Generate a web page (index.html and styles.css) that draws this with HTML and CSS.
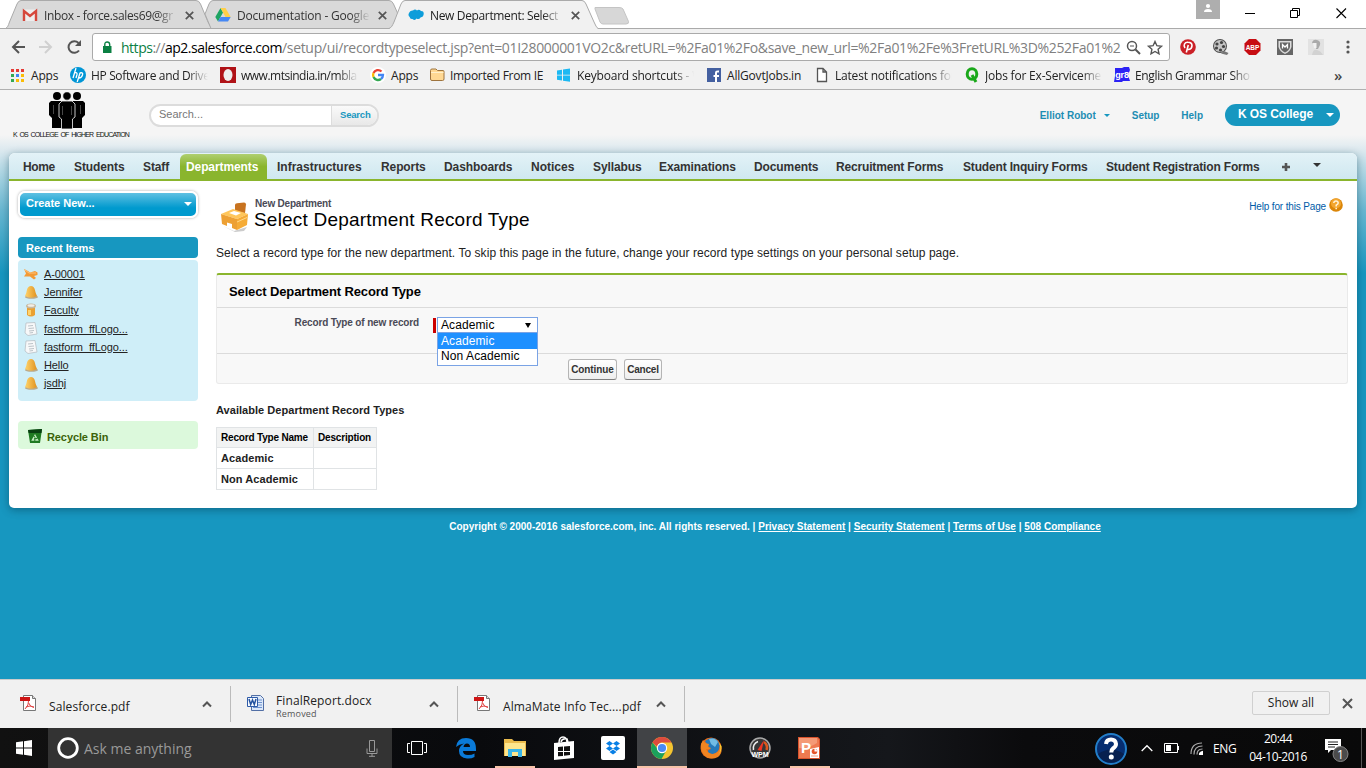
FILE: index.html
```html
<!DOCTYPE html>
<html lang="en">
<head>
<meta charset="utf-8">
<title>New Department: Select Department Record Type</title>
<link rel="stylesheet" href="styles.css">
</head>
<body>
<header class="browser">
  <div class="tabstrip">
    <svg class="tab-shapes" width="640" height="29" viewBox="0 0 640 29">
      <path d="M5.500 28.500C8 27 8 26 9.500 22L17 4Q18.500.500 21 .500H196Q199 .500 200.500 4L208 22Q210 27 213 28.500Z" fill="#d9d9d9" stroke="#aaa"/>
      <path d="M211 28.500L205 14L209 4Q210.500.500 213 .500H389Q392 .500 393.500 4L398 14L392 28.500Z" fill="#d9d9d9" stroke="#aaa"/>
      <path d="M595 7.500H619Q622 7.500 623 9L628.500 21.500Q629 24 626 24H603Q601 24 600 22L595 9Z" fill="#d7d7d7" stroke="#c4c4c4"/>
      <path d="M389 29C392 27 392 26 394 22L401 4Q402.500.500 405 .500H582Q584.500.500 586 4L594 22Q596 27 598 29Z" fill="#f1f1f1"/>
      <path d="M389 28.500C392 27 392 26 394 22L401 4Q402.500.500 405 .500H582Q584.500.500 586 4L594 22Q596 27 598 28.500" fill="none" stroke="#aaa"/>
    </svg>
    <div class="tab tab-one"><svg width="16" height="16" viewBox="0 0 16 16"><path d="M1 2.500H15V14H1Z" fill="#eee"/><path d="M2 14V4L8 9L14 4V14" fill="none" stroke="#d6483c" stroke-width="2.400"/></svg><span class="tab-title fade">Inbox - force.sales69@gr</span><svg class="close" width="9" height="9" viewBox="0 0 9 9"><path d="M.8.800L8.200 8.200M8.200.800L.8 8.200"/></svg></div>
    <div class="tab tab-two"><svg width="16" height="16" viewBox="0 0 16 16"><path d="M5.500 1L.3 10L3 14.500L8 5.500Z" fill="#1da462"/><path d="M5.500 1H10.500L15.700 10H10.500Z" fill="#ffcf48"/><path d="M5.500 10H15.700L13 14.500H3Z" fill="#4688f4"/></svg><span class="tab-title fade">Documentation - Google</span><svg class="close" width="9" height="9" viewBox="0 0 9 9"><path d="M.8.800L8.200 8.200M8.200.800L.8 8.200"/></svg></div>
    <div class="tab tab-three"><svg width="16" height="16" viewBox="0 0 16 16"><path d="M1 6Q2 3 5 3.500Q7 1.500 9 3.500Q11 2 13 4Q16 4 15.700 7Q15.500 10 12.500 10.500Q11 13 8.500 11.500Q7 14 4.500 12Q2 12.500 1.700 10Q-.3 8.500 1 6Z" fill="#0d9dda"/></svg><span class="tab-title fade">New Department: Select</span><svg class="close" width="9" height="9" viewBox="0 0 9 9"><path d="M.8.800L8.200 8.200M8.200.800L.8 8.200"/></svg></div>
    <div class="window-controls">
      <svg class="profile" width="24" height="19" viewBox="0 0 24 19"><path d="M0 0H24V19H0Z" fill="#aeaeae"/><circle cx="12" cy="6" r="2.100" fill="#fff"/><path d="M8 12Q8 9 12 9T16 12Z" fill="#fff"/></svg>
      <svg class="minimize" width="11" height="11" viewBox="0 0 11 11"><path d="M0 5.500H10" stroke="#000"/></svg>
      <svg class="restore" width="11" height="11" viewBox="0 0 11 11"><path d="M.5 2.500H7.500V9.500H.5ZM2.500 2.500V.500H9.500V7.500H7.500" fill="none" stroke="#000"/></svg>
      <svg width="11" height="11" viewBox="0 0 11 11"><path d="M.5.500L10 10M10 .500L.5 10" stroke="#000" stroke-width="1.100"/></svg>
    </div>
  </div>
  <div class="toolbar">
    <svg width="84" height="16" viewBox="0 0 84 16" fill="none" stroke-width="2"><path d="M15 8H3M9 2L3 8L9 14" stroke="#555"/><path d="M29 8H41M35 2L41 8L35 14" stroke="#d0d0d0"/><path d="M69 11.500A5.800 5.800 0 1 1 68.500 4" stroke="#555"/><path d="M71 1V7H65Z" fill="#555"/></svg>
    <div class="address">
      <svg width="10" height="13" viewBox="0 0 10 13"><path d="M1 5H9.500V12H1Z" fill="#0b8043"/><path d="M2.800 6V3.500Q2.800 1 5.200 1T7.700 3.500V6" fill="none" stroke="#0b8043" stroke-width="1.400"/></svg>
      <span class="url"><span class="origin"><span class="scheme">https</span>://<span class="host">ap2.salesforce.com</span></span>/setup/ui/recordtypeselect.jsp?ent=01I28000001VO2c&amp;retURL=%2Fa01%2Fo&amp;save_new_url=%2Fa01%2Fe%3FretURL%3D%252Fa01%2</span>
      <svg width="38" height="15" viewBox="0 0 38 15" fill="none" stroke="#555"><circle cx="6" cy="6" r="4.500" stroke-width="1.500"/><path d="M9.500 9.500L14 14" stroke-width="2"/><path d="M4 6H8"/><path d="M29 1.500L30.900 5.700L35.500 6.200L32.100 9.300L33 13.800L29 11.500L25 13.800L25.900 9.300L22.500 6.200L27.100 5.700Z" stroke-width="1.400"/></svg>
    </div>
    <div class="extensions">
      <svg width="16" height="16" viewBox="0 0 16 16"><circle cx="8" cy="8" r="7.800" fill="#cb2027"/><path d="M5 9Q3.500 7 4.500 5T8 3.200Q12 3.200 12 6.500T8.700 10.500Q7.600 10.500 7.200 9.800M8.300 6L6.300 13.500" fill="none" stroke="#fff" stroke-width="1.600"/></svg>
      <svg width="17" height="16" viewBox="0 0 17 16"><circle cx="8" cy="7" r="7" fill="#4d4d4d"/><circle cx="8" cy="7" r="6" fill="#c4c4c4"/><g fill="#444"><circle cx="5" cy="5" r="1.600"/><circle cx="9.500" cy="3.500" r="1.600"/><circle cx="4.500" cy="9" r="1.600"/><circle cx="8.500" cy="11" r="1.600"/><circle cx="11.500" cy="7.500" r="1.600"/></g><path d="M12 12L16.500 14L15 16L9 14.500Z" fill="#777"/></svg>
      <svg width="17" height="16" viewBox="0 0 17 16"><path d="M5 0H12L16.500 4.500V11.500L12 16H5L.500 11.500V4.500Z" fill="#c70d12"/><text x="8.500" y="11" class="abp">ABP</text></svg>
      <svg width="16" height="16" viewBox="0 0 16 16"><path d="M0 0H16V16H0Z" fill="#666"/><path d="M1.500 2H14.500V8Q13 13 8 15Q3 13 1.500 8Z" fill="#ddd"/><path d="M3 3.500H13V8Q12 11.500 8 13.500Q4 11.500 3 8Z" fill="#666"/><path d="M5.500 9.500V5.500L8 8L10.500 5.500V9.500" fill="none" stroke="#fff" stroke-width="1.300"/></svg>
      <svg width="16" height="16" viewBox="0 0 16 16"><path d="M0 0H16V16H0Z" fill="#e2e2e2"/><path d="M4 4Q5 0 9 1Q13 2 12 6L10 10L8 10L8 5Z" fill="#aaa"/><path d="M5 4H8.500V9H6Z" fill="#f1f1f1"/><path d="M4 16Q5 10 9 11T15 16Z" fill="#d2d2d2"/></svg>
      <svg class="dots" width="4" height="14" viewBox="0 0 4 14" fill="#555"><circle cx="2" cy="2" r="1.600"/><circle cx="2" cy="7" r="1.600"/><circle cx="2" cy="12" r="1.600"/></svg>
    </div>
  </div>
  <nav class="bookmarks">
    <a class="bookmark"><svg width="16" height="16" viewBox="0 0 16 16"><path d="M1 2H4V5H1ZM6 2H9V5H6ZM11 2H14V5H11Z" fill="#e53935"/><path d="M1 7H4V10H1Z" fill="#34a853"/><path d="M6 7H9V10H6Z" fill="#4285f4"/><path d="M11 7H14V10H11ZM11 12H14V15H11ZM6 12H9V15H6Z" fill="#fbbc05"/><path d="M1 12H4V15H1Z" fill="#34a853"/></svg><span>Apps</span></a>
    <a class="bookmark"><svg width="16" height="16" viewBox="0 0 16 16"><circle cx="8" cy="8" r="8" fill="#0096d6"/><path d="M6 1L3 11M4.500 6Q7.500 5 7 7.500L6 11M10 6L7.200 15M9.800 6Q13.500 5 12.500 8T9 11" fill="none" stroke="#fff" stroke-width="1.300"/></svg><span class="clip fade bm-tight">HP Software and Drive</span></a>
    <a class="bookmark"><svg width="16" height="16" viewBox="0 0 16 16"><path d="M0 0H16V16H0Z" fill="#b01217"/><ellipse cx="8" cy="8" rx="4.500" ry="6" fill="#eee"/></svg><span class="clip fade bm-mts">www.mtsindia.in/mbla</span></a>
    <a class="bookmark"><svg width="16" height="16" viewBox="0 0 16 16" fill="none" stroke-width="2.300"><circle cx="8" cy="8" r="8" fill="#fff"/><path d="M11.500 4.500A5 5 0 0 0 3.500 6" stroke="#ea4335"/><path d="M3.500 6A5 5 0 0 0 3.500 10" stroke="#fbbc05"/><path d="M3.500 10A5 5 0 0 0 11 12" stroke="#34a853"/><path d="M11 12Q13 10.500 13 8H8" stroke="#4285f4"/></svg><span>Apps</span></a>
    <a class="bookmark"><svg width="16" height="16" viewBox="0 0 16 16"><path d="M1.500 3.500Q1.500 2 3 2H7L8.500 3.500H14Q15 3.500 15 4.500V12Q15 13.500 13.500 13.500H3Q1.500 13.500 1.500 12Z" fill="#ffd893" stroke="#9e743e"/><path d="M2 5.500H14.500" stroke="#fff0cc"/></svg><span class="bm-import">Imported From IE</span></a>
    <a class="bookmark"><svg width="16" height="16" viewBox="0 0 16 16"><path d="M1 3.500L6 2.700V7.700H1ZM7 2.500L14 1.500V7.700H7ZM1 8.500H6V13.500L1 12.700ZM7 8.500H14V14.700L7 13.700Z" fill="#1cb9f3"/></svg><span class="clip fade">Keyboard shortcuts - W</span></a>
    <a class="bookmark"><svg width="16" height="16" viewBox="0 0 16 16"><path d="M1 1H15V15H1Z" fill="#4460a0"/><path d="M10 15V9M7.500 9H13M10 10V6Q10 4.200 13 4.500" fill="none" stroke="#fff" stroke-width="2"/></svg><span>AllGovtJobs.in</span></a>
    <a class="bookmark"><svg width="16" height="16" viewBox="0 0 16 16"><path d="M3.500 1.500H9L12.500 5V14.500H3.500ZM9 1.500V5H12.500" fill="#fff" stroke="#555" stroke-width="1.300"/></svg><span class="clip fade">Latest notifications for</span></a>
    <a class="bookmark"><svg width="16" height="16" viewBox="0 0 16 16" fill="none" stroke="#1aa81a" stroke-width="3"><ellipse cx="8" cy="7" rx="4.800" ry="5.300"/><path d="M8 8L12 15"/></svg><span class="clip fade">Jobs for Ex-Serviceme</span></a>
    <a class="bookmark"><svg width="16" height="16" viewBox="0 0 16 16"><path d="M1 1H8L10 0H15L16 3L14 8L16 14H9L8 15H0L1 9Z" fill="#2c22f5"/><text x="8" y="11" class="gr8">gr8</text></svg><span class="clip fade bm-tight">English Grammar Sho</span></a>
    <span class="more">»</span>
  </nav>
</header>

<main class="page">
  <div class="page-head">
    <div class="org-logo">
      <svg width="36" height="38" viewBox="0 0 36 38"><circle cx="8" cy="4" r="4"/><circle cx="28" cy="4" r="4"/><path d="M2 9H13V36H3V26L0 23V11ZM23 9H34L36 11V23L33 26V36H23Z"/><path d="M10 12L13 9H23L26 12V25L23.500 27V37H12.500V27L10 25Z" stroke="#f5f5f5" stroke-width=".8"/><circle cx="18" cy="4" r="4.200" stroke="#f5f5f5" stroke-width=".7"/><path d="M4.500 13V22M31.500 13V22M13.500 14V23M22.500 14V23" stroke="#777" stroke-width=".6"/></svg>
      <span>K OS COLLEGE OF HIGHER EDUCATION</span>
    </div>
    <div class="search"><span class="search-field">Search...</span><span class="search-button">Search</span></div>
    <div class="user-links">
      <a class="user-name">Elliot Robot</a><i class="caret caret-blue"></i><a class="setup">Setup</a><a class="help">Help</a>
      <div class="app-menu"><span>K OS College</span><i class="caret caret-white"></i></div>
    </div>
  </div>
  <div class="card">
    <nav class="app-tabs">
      <a class="home">Home</a><a>Students</a><a>Staff</a><a class="active">Departments</a><a class="wide">Infrastructures</a><a>Reports</a><a>Dashboards</a><a class="wide">Notices</a><a>Syllabus</a><a>Examinations</a><a>Documents</a><a class="narrow">Recruitment Forms</a><a class="narrow">Student Inquiry Forms</a><a class="narrow">Student Registration Forms</a>
      <svg class="plus" width="8" height="8" viewBox="0 0 8 8"><path d="M0 4H8M4 0V8" stroke="#555" stroke-width="2.600"/></svg><i class="caret caret-dark"></i>
    </nav>
    <div class="columns">
      <aside class="sidebar">
        <div class="create"><span>Create New...</span><i class="caret caret-white"></i></div>
        <h2 class="side-title">Recent Items</h2>
        <ul class="recent">
          <li><svg width="14" height="14" viewBox="0 0 14 14"><path d="M0 2L4 4L6 5.500L11 4L13.500 5.500V8L10 9L12 11L10 12.500L6 9.500L0 9.500L2 6.500Z" fill="#f39a35"/><path d="M1 3L5 6L12 6" stroke="#ffc27a" fill="none"/></svg><a>A-00001</a></li>
          <li><svg width="14" height="14" viewBox="0 0 14 14"><use href="#bell"/></svg><a>Jennifer</a></li>
          <li><svg width="14" height="14" viewBox="0 0 14 14"><path d="M3 3H11V12Q7 15 3 12Z" fill="#eaa132"/><ellipse cx="7" cy="3" rx="5" ry="2.500" fill="#c6b8a0"/><ellipse cx="7" cy="2.500" rx="3.500" ry="1.300" fill="#f2eee6"/><path d="M4 7H7V12H4Z" fill="#ffd26c"/></svg><a>Faculty</a></li>
          <li><svg width="14" height="14" viewBox="0 0 14 14"><use href="#sheet"/></svg><a>fastform_ffLogo...</a></li>
          <li><svg width="14" height="14" viewBox="0 0 14 14"><use href="#sheet"/></svg><a>fastform_ffLogo...</a></li>
          <li><svg width="14" height="14" viewBox="0 0 14 14"><use href="#bell"/></svg><a>Hello</a></li>
          <li><svg width="14" height="14" viewBox="0 0 14 14"><use href="#bell"/></svg><a>jsdhj</a></li>
        </ul>
        <div class="recycle"><svg width="14" height="15" viewBox="0 0 14 15"><path d="M0 1L14 0L12 14H2Z" fill="#1f7a22"/><path d="M0 1L14 0L13.500 4H.7Z" fill="#0a3f12"/><path d="M4.500 11L7 6.500L9.500 11Z" fill="none" stroke="#c5ecc2" stroke-width="1.500" stroke-dasharray="3.500 1"/></svg><span>Recycle Bin</span></div>
      </aside>
      <section class="content">
        <div class="title-row">
          <svg width="29" height="30" viewBox="0 0 29 30"><path d="M3 24L14 29L27 25L24 29L15 30Z" fill="#ccc"/><path d="M15 3Q15 1.500 17 1.200L24 .500Q26 .700 26 2.500L25 11L15 10Z" fill="#c87320"/><path d="M1 12L13 7L28 12L17 17Z" fill="#ffc65a"/><path d="M1 12L17 17V28L12 26V22L7 20.500V24L2 22Z" fill="#eda033"/><path d="M17 17L28 12L27 23L17 28Z" fill="#f5ab36"/><path d="M17 20L27 15.500" stroke="#ffd88a" fill="none"/><path d="M9 11L14 9L21 11L16 13.500Z" fill="#fff"/></svg>
          <div class="titles"><h1>New Department</h1><h2>Select Department Record Type</h2></div>
          <div class="page-help"><a>Help for this Page</a><svg width="14" height="14" viewBox="0 0 14 14"><circle cx="7" cy="7" r="6.800" fill="#db8608"/><circle cx="7" cy="5.500" r="5" fill="#f3a62f"/><path d="M4.800 5Q5 3 7 3T9.200 5Q9.200 6.200 7.200 7.200V8.500M7.200 9.800V11.300" fill="none" stroke="#fff3d8" stroke-width="1.500"/></svg></div>
        </div>
        <p class="intro">Select a record type for the new department. To skip this page in the future, change your record type settings on your personal setup page.</p>
        <div class="form">
          <h3>Select Department Record Type</h3>
          <div class="form-row">
            <label>Record Type of new record</label><i class="required"></i>
            <div class="select"><span>Academic</span><i class="arrow"></i>
              <div class="options"><div class="chosen">Academic</div><div>Non Academic</div></div>
            </div>
          </div>
          <div class="form-actions"><span class="btn btn-continue">Continue</span><span class="btn btn-cancel">Cancel</span></div>
        </div>
        <h4>Available Department Record Types</h4>
        <table class="types">
          <tr><th class="type-name">Record Type Name</th><th class="type-desc">Description</th></tr>
          <tr><td>Academic</td><td></td></tr>
          <tr><td>Non Academic</td><td></td></tr>
        </table>
      </section>
    </div>
  </div>
  <footer>Copyright © 2000-2016 salesforce.com, inc. All rights reserved. | <a>Privacy Statement</a> | <a>Security Statement</a> | <a>Terms of Use</a> | <a>508 Compliance</a></footer>
</main>

<div class="downloads">
  <div class="download"><svg width="17" height="17" viewBox="0 0 17 17"><use href="#pdf"/></svg><span class="file">Salesforce.pdf</span><svg class="chev" width="10" height="7" viewBox="0 0 10 7"><path d="M1 5.500L5 1.500L9 5.500"/></svg></div>
  <div class="download"><svg width="17" height="17" viewBox="0 0 17 17"><path d="M4.500.500H13.500L16.500 3.500V15.500H4.500Z" fill="#dce8f9" stroke="#526fa5"/><path d="M11 5H15M11 7.500H15M11 10H15M6 12.500H15" stroke="#6e93cf"/><path d="M.5 2.500H10.500V11.500H.5Z" fill="#f7faff" stroke="#2e5ba8"/><path d="M2 4L3.700 9.500L5.500 5L7.300 9.500L9 4" fill="none" stroke="#2554a0" stroke-width="1.500"/></svg><span class="file file-doc">FinalReport.docx<small>Removed</small></span><svg class="chev" width="10" height="7" viewBox="0 0 10 7"><path d="M1 5.500L5 1.500L9 5.500"/></svg></div>
  <div class="download"><svg width="17" height="17" viewBox="0 0 17 17"><use href="#pdf"/></svg><span class="file">AlmaMate Info Tec....pdf</span><svg class="chev" width="10" height="7" viewBox="0 0 10 7"><path d="M1 5.500L5 1.500L9 5.500"/></svg></div>
  <span class="show-all">Show all</span>
  <svg class="close-bar" width="11" height="11" viewBox="0 0 11 11"><path d="M1 1L10 10M10 1L1 10" stroke="#555" stroke-width="2"/></svg>
</div>

<div class="taskbar">
  <div class="slot start"><svg width="16" height="16" viewBox="0 0 16 16"><path d="M0 2.300L7 1.300V7.500H0ZM8 1.200L16 0V7.500H8ZM0 8.500H7V14.700L0 13.700ZM8 8.500H16V16L8 14.800Z" fill="#fff"/></svg></div>
  <div class="cortana"><svg width="22" height="22" viewBox="0 0 22 22"><circle cx="11" cy="11" r="9.300" fill="none" stroke="#fff" stroke-width="2.800"/></svg><span>Ask me anything</span><svg width="12" height="17" viewBox="0 0 12 17" fill="none" stroke="#999"><path d="M3.500.500H8.500V11.500H3.500ZM1 8.500V13.500H11V8.500M6 13.500V16.500M3 16.300H9"/></svg></div>
  <div class="slot"><svg width="20" height="16" viewBox="0 0 20 16" fill="none" stroke="#fff"><path d="M4.500 1.500H15.500V14.500H4.500ZM3 3.500H.5V12.500H3M17 3.500H19.500V12.500H17"/></svg></div>
  <div class="slot"><svg width="22" height="22" viewBox="0 0 22 22"><path d="M1 10Q2 1 11 1Q21 1 21 12V14H8Q8 18 13 18Q17 18 19.500 16.500V20Q16 22 12 21.500Q4 21 4 14Q4 9 9 6.500Q4 7 1 10ZM8.500 10H15Q15 6.500 12 6.500T8.500 10Z" fill="#0a7ad8" fill-rule="evenodd"/></svg></div>
  <div class="slot running"><svg width="22" height="20" viewBox="0 0 22 20"><path d="M0 1H8L10 3H22V18H0Z" fill="#eabb4d"/><path d="M1 5H21V18H1Z" fill="#fde58d"/><path d="M4 11H18V19H14V14H8V19H4Z" fill="#39b5e9"/></svg></div>
  <div class="slot"><svg width="22" height="24" viewBox="0 0 22 24"><path d="M6 7Q6 1 10 1T14 7M8 6Q9 2 14 3L15 6" fill="none" stroke="#fff" stroke-width="1.500"/><path d="M1 7L21 5V22L1 24Z" fill="#fff"/><path d="M5 11L10 10.500V15H5ZM11 10.500L17 10V15H11ZM5 16H10V20L5 20.200ZM11 16H17V19L11 19.700Z" fill="#111"/></svg></div>
  <div class="slot"><svg width="24" height="24" viewBox="0 0 24 24"><rect width="24" height="24" rx="2" fill="#fff"/><path d="M8.500 5L12 7.500L8.500 10L5 7.500ZM15.500 5L19 7.500L15.500 10L12 7.500ZM8.500 10L12 12.500L8.500 15L5 12.500ZM15.500 10L19 12.500L15.500 15L12 12.500ZM8.500 16L12 13.500L15.500 16L12 18.500Z" fill="#087fe5"/></svg></div>
  <div class="slot running active-app"><svg width="22" height="22" viewBox="0 0 22 22"><circle cx="11" cy="11" r="11" fill="#f4c430"/><path d="M1.500 5.500A11 11 0 0 1 20.500 5.500H11Q7 5.500 6.200 10Z" fill="#dd4b3e"/><path d="M1.500 5.500A11 11 0 0 0 10.500 22L15 14Q9 17 6 11Z" fill="#1ba15c"/><circle cx="11" cy="11" r="5.200" fill="#fff"/><circle cx="11" cy="11" r="4.100" fill="#4a8af4"/></svg></div>
  <div class="slot"><svg width="22" height="22" viewBox="0 0 22 22"><circle cx="11" cy="11" r="10.500" fill="#e66a18"/><path d="M5 4Q13-2 18 4Q21 9 18 14Q14 19 9 16Q6 13 11 12L8 9Z" fill="#2679b9"/><path d="M9 2Q15 0 18 5L15 10L11 7Z" fill="#72bce4"/><path d="M1 7L3 3L5 6L9 7L8 10L11 11Q9 13 6 12Q9 19 16 16Q20 14 20 8Q24 15 18 20Q10 24 4 18Q0 13 1 7Z" fill="#ef8421"/><path d="M18 5Q23 11 18 18Q22 14 21.500 9Z" fill="#ffd331"/></svg></div>
  <div class="slot"><svg width="22" height="22" viewBox="0 0 22 22"><circle cx="11" cy="11" r="10" fill="#373737" stroke="#aaa" stroke-width="1.500"/><path d="M4.500 13A7 7 0 0 1 9 4.500" fill="none" stroke="#eee" stroke-width="1.500"/><path d="M15 5A7 7 0 0 1 17.500 13" fill="none" stroke="#dd571d" stroke-width="2.500"/><path d="M8.500 13L15 3L12.500 14Z" fill="#f13524"/><text x="11" y="20" class="wpm">WPM</text></svg></div>
  <div class="slot running"><svg width="22" height="22" viewBox="0 0 22 22"><path d="M0 0H20L22 2V22H0Z" fill="#d9532c"/><path d="M1 1H19.500L21 2.500V21H1Z" fill="#ee7a50"/><path d="M1 1H19V6Q10 12 1 11Z" fill="#f49a76"/><path d="M12 12L21 10V21H12Z" fill="#fff"/><circle cx="16.500" cy="14.500" r="2.800" fill="#e4572c"/><path d="M16.500 14.500V11L20 14.500Z" fill="#fff"/><path d="M13 19H20" stroke="#f0a184"/><text x="3" y="16" class="ppt">P</text></svg></div>
  <div class="tray">
    <svg class="help-orb" width="32" height="32" viewBox="0 0 32 32"><circle cx="16" cy="16" r="15" fill="#062d70" stroke="#237ec9" stroke-width="2"/><path d="M3 21A14 14 0 0 0 29 21Q16 12 3 21Z" fill="#07204f"/><path d="M11 11Q11.500 6.500 16 6.500T21 11Q21 13.500 18 15.500Q16.300 16.700 16.300 19.500" fill="none" stroke="#fff" stroke-width="4"/><circle cx="16.300" cy="24" r="2.500" fill="#fff"/></svg>
    <svg class="up" width="12" height="8" viewBox="0 0 12 8"><path d="M.7 7L6 1.700L11.300 7" fill="none" stroke="#fff" stroke-width="1.300"/></svg>
    <svg class="battery" width="15" height="10" viewBox="0 0 15 10"><path d="M.5.500H13.500V9.500H.5ZM14.500 3V7" fill="none" stroke="#fff"/><path d="M2 2H7V8H2Z" fill="#fff"/></svg>
    <svg class="wifi" width="13" height="13" viewBox="0 0 13 13" fill="none" stroke="#aaa" stroke-width="1.200"><path d="M1 12Q1 1 12 1M4 12.500Q4 4 12.500 4M7 12.500Q7 7 12.500 7"/><path d="M9.500 12.500Q9.500 10 12.500 9.500V12.500Z" fill="#fff" stroke="#fff"/></svg>
    <span class="lang">ENG</span>
    <span class="clock"><span>20:44</span><span class="date">04-10-2016</span></span>
    <svg class="notify" width="26" height="26" viewBox="0 0 26 26"><path d="M1 2H17V13H7L4 16V13H1Z" fill="#fff"/><path d="M4 5H14M4 7.500H14M4 10H11" stroke="#222"/><circle cx="16.500" cy="17" r="7.500" fill="#4b4b4b" stroke="#858585"/><text x="16.500" y="21.500" class="count">1</text></svg>
    <i class="peek"></i>
  </div>
</div>

<svg class="symbols" width="0" height="0">
  <defs>
    <linearGradient id="gold"><stop offset="0" stop-color="#ffd46c"/><stop offset="1" stop-color="#e09220"/></linearGradient>
    <g id="bell"><ellipse cx="7.500" cy="12" rx="6.500" ry="1.800" fill="#b9a98c"/><path d="M1 11Q2.500 8 3 4.500Q4 1 7 1T10.800 4.500Q11.500 8 13 11Q7 14.500 1 11Z" fill="url(#gold)"/></g>
    <g id="sheet"><path d="M2 1L11 .500L13 12L4 13.500L1 11Z" fill="#f7f8f9" stroke="#b9c0c5" stroke-width=".8"/><path d="M4 4L9 3.500M4.500 6.500L10 6M5 9L10 8.500M5.500 11L9 10.500" stroke="#bcc3c8"/></g>
    <g id="pdf"><path d="M3.500.500H12.500L15.500 3.500V15.500H3.500Z" fill="#fff" stroke="#777"/><path d="M0 2H10V6H0Z" fill="#ce1515"/><path d="M8.500 6Q9 10 5 14M8.700 8Q10 12 14 12.500M6 12Q10 10 14 12" fill="none" stroke="#e04545"/><path d="M12.500.500V3.500H15.500" fill="#ddd" stroke="#777"/></g>
  </defs>
</svg>
</body>
</html>
```

FILE: styles.css
```css
* { box-sizing: border-box; }
body { margin: 0; width: 1366px; height: 768px; overflow: hidden; display: flex; flex-direction: column; font-family: "Liberation Sans", Arial, sans-serif; color: #222; }
svg { flex: none; display: block; }
h1, h2, h3, h4, p, ul { margin: 0; padding: 0; }
.symbols { position: absolute; }
.fade { -webkit-mask-image: linear-gradient(to right, #000 calc(100% - 20px), transparent); mask-image: linear-gradient(to right, #000 calc(100% - 20px), transparent); }

/* Browser chrome */
.browser { height: 90px; flex: none; background: #f1f1f1; border-bottom: 1px solid #b0b0b0; font-family: "Open Sans", "Noto Sans", sans-serif; }
.tabstrip { position: relative; height: 29px; background: #fff; border-bottom: 1px solid #aaa; display: flex; }
.tab-shapes { position: absolute; left: 0; top: 0; }
.tab { position: relative; display: flex; align-items: center; height: 30px; font-size: 12px; color: #333; }
.tab-one { width: 193px; margin-left: 22px; }
.tab-two { width: 193px; }
.tab-three { width: 193px; color: #222; }
.tab-title { width: 133px; margin: 0 8px 0 6px; white-space: nowrap; overflow: hidden; letter-spacing: -.2px; }
.tab-one .tab-title, .tab-three .tab-title { letter-spacing: -.35px; }
.close { fill: none; stroke: #555; stroke-width: 1.7; }
.window-controls { margin-left: auto; display: flex; align-items: center; padding-right: 19px; height: 26px; }
.profile { align-self: flex-start; margin-right: 25px; }
.minimize { margin-right: 34px; }
.restore { margin-right: 35px; }
.toolbar { height: 33px; display: flex; align-items: center; padding: 3px 16px 0 10px; }
.toolbar > svg { margin-right: -2px; }
.address { width: 1078px; height: 28px; border: 1px solid #aaa; border-radius: 3px; background: #fff; display: flex; align-items: center; padding: 0 5px 0 9px; color: #808080; font-size: 14px; }
.url { flex: 1; margin-left: 9px; margin-right: 6px; white-space: nowrap; letter-spacing: -.325px; }
.origin { letter-spacing: -.48px; }
.scheme { color: #0b8043; }
.host { color: #000; }
.extensions { flex: 1; display: flex; align-items: center; gap: 15.5px; margin-left: 10px; }
.dots { margin-left: 6px; }
.abp { font: bold 6.5px "Liberation Sans", sans-serif; fill: #fff; text-anchor: middle; }
.bookmarks { display: grid; grid-template-columns: 60px 150px 150px 59px 127px 150px 108px 150px 150px 220px auto; padding-left: 10px; height: 26px; align-items: center; font-size: 12px; color: #222; }
.bookmark { display: flex; align-items: center; gap: 5px; white-space: nowrap; letter-spacing: -.2px; }
.bm-tight { letter-spacing: -.35px; }
.bm-mts { letter-spacing: -.5px; }
.bm-import { letter-spacing: -.3px; }
.clip { width: 117px; overflow: hidden; }
.gr8 { font: bold 9px "Liberation Sans", sans-serif; fill: #fff; text-anchor: middle; }
.more { font-size: 15px; font-weight: 600; line-height: 20px; color: #444; }

/* Application page */
.page { flex: 1; min-height: 0; background: linear-gradient(#f5f5f5 0, #f5f5f5 45px, #dce9ef 60px, #b8dbe7 78px, #69b8d2 120px, #1797c0 183px); }
.page-head { height: 63px; display: flex; }
.org-logo { width: 116px; margin: 2px 20px 0 13px; display: flex; flex-direction: column; align-items: center; font-size: 7.5px; line-height: 10px; white-space: nowrap; color: #111; }
.org-logo svg { margin-right: 8px; }
.org-logo span { font-size: 7px; letter-spacing: -.85px; word-spacing: 1.6px; }
.search { margin-top: 14px; height: 23px; width: 230px; display: flex; border: 2px solid #dcdcdc; border-radius: 12px; overflow: hidden; background: #fff; }
.search-field { width: 181px; padding: 0 0 0 8px; font-size: 11px; line-height: 17px; color: #777; border-right: 1px solid #ddd; }
.search-button { flex: 1; background: linear-gradient(#fafafa, #e8e8e8); color: #1797c0; font-size: 9.5px; font-weight: bold; line-height: 18px; padding-left: 8px; letter-spacing: -.2px; }
.user-links { margin: 14px 26px 0 auto; height: 22px; display: flex; align-items: center; font-size: 10px; font-weight: bold; color: #1d8db3; }
.caret { width: 0; height: 0; border: 3px solid transparent; border-bottom: 0; }
.caret-blue { border-top-color: #1797c0; margin: 0 22px 0 8px; }
.setup { margin-right: 22px; letter-spacing: -.05px; }
.help { margin-right: 22px; }
.app-menu { width: 115px; height: 22px; border-radius: 11px; background: #1797c0; color: #fff; font-size: 12px; display: flex; align-items: center; justify-content: space-between; padding: 0 6px 2px 13px; letter-spacing: -.08px; }
.caret-white { border-top-color: #fff; border-width: 4px 4px 0; margin-top: 2px; }
.card { width: 1348px; height: 355px; margin: 0 auto; background: #fff; border-radius: 6px 6px 5px 5px; box-shadow: 0 2px 9px rgba(0, 50, 70, .45); overflow: hidden; }
.app-tabs { height: 28px; background: linear-gradient(#e3f2f7, #cfe8f0); border-bottom: 2px solid #8ab52d; display: grid; grid-template-columns: 51px 69px 37px 97px 104px 63px 87px 62px 66px 95px 82px 127px 143px 176px 31px 12px; padding: 2px 0 0 14px; align-items: center; font-size: 12px; font-weight: bold; color: #333; white-space: nowrap; letter-spacing: -.1px; }
.app-tabs .home { letter-spacing: -.4px; }
.app-tabs .wide { letter-spacing: 0; }
.app-tabs .narrow { letter-spacing: -.17px; }
.app-tabs .active { width: 87px; height: 25px; margin-top: -1px; padding-left: 6px; line-height: 26px; border-radius: 6px 6px 0 0; background: linear-gradient(#afcf70, #8ab52d 50%); color: #fff; }
.caret-dark { border-top-color: #333; border-width: 4px 4px 0; margin-bottom: 4px; }
.columns { display: flex; }
.sidebar { width: 180px; margin: 10px 18px 0 9px; }
.create { height: 27px; border: 2px solid #fff; border-radius: 7px; box-shadow: 0 0 3px #aaa; background: linear-gradient(#5fc0e2, #009ace 65%); color: #fff; font-size: 11px; font-weight: bold; display: flex; align-items: center; justify-content: space-between; padding: 0 4px 3px 6px; }
.side-title { margin-top: 19px; height: 21px; border-radius: 4px; background: #1797c0; color: #fff; font-size: 11px; line-height: 22px; padding-left: 8px; }
.recent { margin-top: 2px; height: 141px; list-style: none; border-radius: 4px; background: #cfeef8; padding: 5px 0 0 6px; font-size: 11px; }
.recent li { display: flex; align-items: center; gap: 6px; height: 18.2px; }
.recent a { text-decoration: underline; letter-spacing: -.1px; }
.recycle { margin-top: 20px; height: 28px; border-radius: 4px; background: #dcf9dc; color: #3b6309; font-size: 11px; font-weight: bold; display: flex; align-items: center; padding: 3px 0 0 10px; gap: 5px; letter-spacing: -.1px; }
.content { width: 1132px; }
.title-row { display: flex; height: 51px; padding: 21px 5px 0 4px; }
.titles { margin: -4px 0 0 5px; }
.titles h1 { font-size: 10px; line-height: 12px; padding-left: 1px; color: #4a4a56; letter-spacing: -.2px; }
.titles h2 { font-size: 19px; font-weight: normal; line-height: 20px; color: #000; white-space: nowrap; letter-spacing: .2px; }
.page-help { margin: -4px 0 0 auto; display: flex; gap: 3px; font-size: 10px; line-height: 17px; color: #015ba7; }
.page-help a { letter-spacing: -.15px; }
.intro { height: 41px; padding-top: 14px; font-size: 12px; line-height: 15px; white-space: nowrap; letter-spacing: .055px; }
.form { height: 111px; background: #f8f8f8; border: 1px solid #eaeaea; border-top: 2px solid #8ab52d; border-radius: 3px; }
.form h3 { height: 33px; border-bottom: 1px solid #dbdbdb; padding-left: 12px; font-size: 13px; line-height: 34px; color: #000; letter-spacing: -.13px; }
.form-row { height: 46px; border-bottom: 1px solid #dbdbdb; display: flex; padding-top: 9px; }
.form-row label { width: 202px; text-align: right; font-size: 10px; font-weight: bold; line-height: 12px; color: #4a4a56; letter-spacing: -.15px; }
.required { width: 3px; height: 15px; background: #c00; margin: 1px 1px 0 14px; }
.select { position: relative; width: 101px; height: 16px; background: #fff; border: 1px solid #7aa3e5; display: flex; align-items: center; justify-content: space-between; padding: 0 6px 0 3px; font-size: 12px; color: #000; letter-spacing: .1px; }
.arrow { border: 3px solid transparent; border-top: 5px solid #000; border-bottom: 0; }
.options { position: absolute; left: -1px; top: 14px; width: 101px; height: 34px; border: 1px solid #7aa3e5; background: #fff; line-height: 15px; }
.options div { padding-left: 3px; height: 15px; }
.options .chosen { background: #1e90ff; color: #fff; height: 16px; line-height: 16px; }
.form-actions { display: flex; gap: 7px; padding: 5px 0 0 351px; }
.btn { height: 21px; border: 1px solid #b5b5b5; border-bottom-color: #7f7f7f; border-radius: 3px; background: linear-gradient(#fff, #eee); font-size: 10px; font-weight: bold; line-height: 20px; text-align: center; color: #333; }
.btn-continue { width: 49px; letter-spacing: -.1px; }
.btn-cancel { width: 38px; letter-spacing: -.2px; }
.content h4 { font-size: 11px; line-height: 14px; margin-top: 19px; letter-spacing: .04px; }
.types { margin-top: 10px; width: 160px; border-collapse: collapse; table-layout: fixed; font-size: 11px; font-weight: bold; }
.types th, .types td { border: 1px solid #e0e3e5; padding: 0 0 0 4px; text-align: left; height: 21px; white-space: nowrap; }
.types td { letter-spacing: .08px; }
.types th { height: 20px; background: #f2f3f3; font-size: 10px; color: #000; letter-spacing: -.18px; }
.type-name { width: 97px; }
.type-desc { width: 63px; }
footer { margin-top: 13px; text-align: center; font-size: 10px; font-weight: bold; line-height: 12px; color: #fff; padding-left: 184px; letter-spacing: .02px; }
footer a { text-decoration: underline; }

/* Download shelf */
.downloads { height: 49px; flex: none; background: #f1f1f1; border-top: 1px solid #ccc; display: flex; align-items: center; font: 12px "Open Sans", "Noto Sans", sans-serif; color: #222; }
.download { width: 227px; height: 36px; border-right: 1px solid #bbb; display: flex; align-items: center; padding: 0 18px 0 16px; }
.download:first-child { width: 231px; padding-left: 20px; }
.download > svg:first-child { margin-top: -2px; }
.file { margin-left: 12px; padding-top: 4px; flex: 1; white-space: nowrap; letter-spacing: .1px; }
.file-doc { padding: 3px 0 0; line-height: 15px; }
.file small { display: block; font-size: 9px; line-height: 11px; color: #555; letter-spacing: .2px; }
.chev { fill: none; stroke: #555; stroke-width: 2; }
.show-all { margin: -2px 0 0 auto; width: 78px; height: 24px; border: 1px solid #d0d0d0; border-radius: 2px; text-align: center; line-height: 22px; }
.close-bar { margin: -1px 13px 0 12px; }

/* Taskbar */
.taskbar { height: 40px; flex: none; display: flex; background: linear-gradient(90deg, #111, #090a0d 35%, #15171b 65%, #0b0b0d 75%, #090909); font-family: "Open Sans", "Noto Sans", sans-serif; color: #fff; }
.slot { position: relative; width: 49.1px; display: flex; align-items: center; justify-content: center; }
.start { width: 48px; }
.cortana { width: 344px; background: #333; display: flex; align-items: center; padding: 0 14px 0 9px; }
.cortana span { flex: 1; margin-left: 5px; font-size: 14px; color: #999; }
.running::after { content: ""; position: absolute; left: 5px; right: 4px; bottom: 0; height: 2px; background: #f7c3a8; }
.active-app { background: #414346; }
.active-app::after { left: 0; right: 0; }
.ppt { font: bold 15px "Liberation Sans", sans-serif; fill: #fff; }
.tray { margin-left: auto; display: flex; align-items: center; font-size: 12px; }
.help-orb { margin: 2px 14px 0 0; }
.up { margin-right: 11px; }
.battery { margin-right: 11px; }
.wifi { margin-right: 10px; }
.lang { width: 24px; letter-spacing: -.4px; }
.clock { width: 84px; margin: 0 1px 0 -1px; display: flex; flex-direction: column; align-items: center; line-height: 18px; }
.clock span { letter-spacing: -.5px; }
.notify { margin: 4px 11px 0 3px; }
.count { font: 12px "Open Sans", sans-serif; fill: #fff; text-anchor: middle; }
.peek { width: 5px; height: 40px; border-left: 1px solid #555; }
.wpm { font: bold 7px "Liberation Sans", sans-serif; fill: #fff; text-anchor: middle; }
```
